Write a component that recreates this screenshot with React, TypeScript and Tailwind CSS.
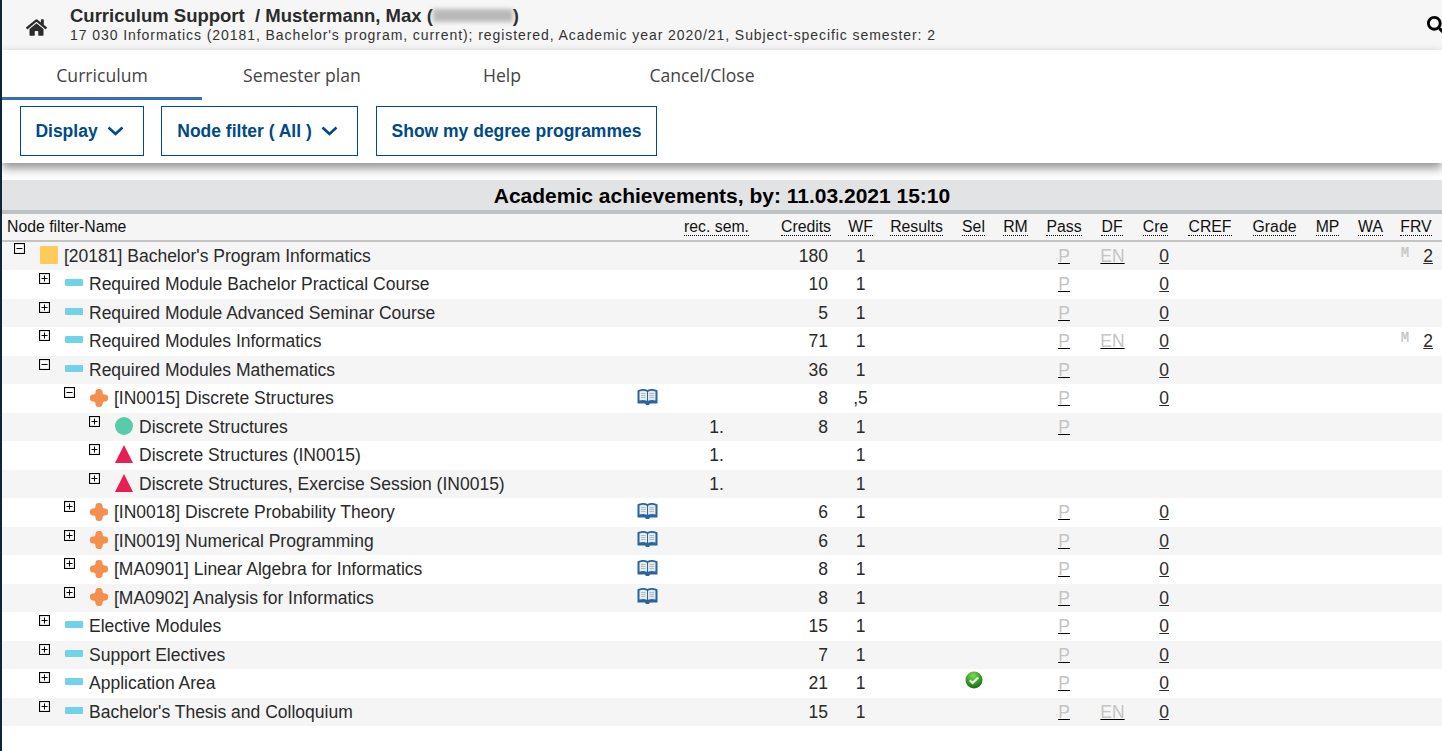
import { FaHome, FaSearch } from 'react-icons/fa'

const GRID = 'grid grid-cols-[630px_43px_90px_75px_41px_71px_42px_43px_54px_42px_45px_64px_64px_43px_43px_50px]'

const headers = [
  { label: 'rec. sem.', cls: 'text-center pr-[7px]' },
  { label: 'Credits', cls: 'text-center pl-[7px]' },
  { label: 'WF', cls: 'text-center' },
  { label: 'Results', cls: 'text-center' },
  { label: 'Sel', cls: 'text-center pl-[1px]' },
  { label: 'RM', cls: 'text-center' },
  { label: 'Pass', cls: 'text-center' },
  { label: 'DF', cls: 'text-center' },
  { label: 'Cre', cls: 'text-center' },
  { label: 'CREF', cls: 'text-center' },
  { label: 'Grade', cls: 'text-center pl-[1px]' },
  { label: 'MP', cls: 'text-center' },
  { label: 'WA', cls: 'text-center' },
  { label: 'FRV', cls: 'text-center pr-[2px]' },
]

type Row = {
  level: number
  icon: 'folder' | 'dash' | 'plus' | 'dot' | 'tri'
  name: string
  open?: boolean
  book?: boolean
  sem?: string
  credits?: string
  wf: string
  sel?: boolean
  pass?: boolean
  df?: boolean
  cre?: boolean
  frv?: boolean
}

const rows: Row[] = [
  { level: 0, icon: 'folder', name: "[20181] Bachelor's Program Informatics", open: true, credits: '180', wf: '1', pass: true, df: true, cre: true, frv: true },
  { level: 1, icon: 'dash', name: 'Required Module Bachelor Practical Course', credits: '10', wf: '1', pass: true, cre: true },
  { level: 1, icon: 'dash', name: 'Required Module Advanced Seminar Course', credits: '5', wf: '1', pass: true, cre: true },
  { level: 1, icon: 'dash', name: 'Required Modules Informatics', credits: '71', wf: '1', pass: true, df: true, cre: true, frv: true },
  { level: 1, icon: 'dash', name: 'Required Modules Mathematics', open: true, credits: '36', wf: '1', pass: true, cre: true },
  { level: 2, icon: 'plus', name: '[IN0015] Discrete Structures', open: true, book: true, credits: '8', wf: ',5', pass: true, cre: true },
  { level: 3, icon: 'dot', name: 'Discrete Structures', sem: '1.', credits: '8', wf: '1', pass: true },
  { level: 3, icon: 'tri', name: 'Discrete Structures (IN0015)', sem: '1.', wf: '1' },
  { level: 3, icon: 'tri', name: 'Discrete Structures, Exercise Session (IN0015)', sem: '1.', wf: '1' },
  { level: 2, icon: 'plus', name: '[IN0018] Discrete Probability Theory', book: true, credits: '6', wf: '1', pass: true, cre: true },
  { level: 2, icon: 'plus', name: '[IN0019] Numerical Programming', book: true, credits: '6', wf: '1', pass: true, cre: true },
  { level: 2, icon: 'plus', name: '[MA0901] Linear Algebra for Informatics', book: true, credits: '8', wf: '1', pass: true, cre: true },
  { level: 2, icon: 'plus', name: '[MA0902] Analysis for Informatics', book: true, credits: '8', wf: '1', pass: true, cre: true },
  { level: 1, icon: 'dash', name: 'Elective Modules', credits: '15', wf: '1', pass: true, cre: true },
  { level: 1, icon: 'dash', name: 'Support Electives', credits: '7', wf: '1', pass: true, cre: true },
  { level: 1, icon: 'dash', name: 'Application Area', credits: '21', wf: '1', sel: true, pass: true, cre: true },
  { level: 1, icon: 'dash', name: "Bachelor's Thesis and Colloquium", credits: '15', wf: '1', pass: true, df: true, cre: true },
]

const indent = ['ml-[12px]', 'ml-[37px]', 'ml-[62px]', 'ml-[87px]']

function Toggle({ open, top }: { open?: boolean; top?: boolean }) {
  return (
    <svg width="11" height="11" viewBox="0 0 11 11" className={`shrink-0 self-start ${top ? 'mt-[1px]' : 'mt-[3px]'}`}>
      <rect x="0.5" y="0.5" width="10" height="10" fill="#fff" stroke="#000" strokeWidth="1.2" />
      <path d={open ? 'M2.500 5.500h6' : 'M2.500 5.500h6M5.500 2.500v6'} stroke="#000" />
    </svg>
  )
}

function NodeIcon({ type }: { type: Row['icon'] }) {
  if (type === 'folder') {
    return <span className="block w-[18px] h-[18px] -mt-[2px] rounded-[1px] bg-[#fdcb5c]" />
  }
  if (type === 'dash') {
    return <span className="block w-[18px] h-[7px] mb-[3px] rounded-[1px] bg-[#70d3e8]" />
  }
  if (type === 'plus') {
    return (
      <svg width="18" height="18" viewBox="0 0 18 18" className="-mt-[1px]">
        <g fill="#f58f4e">
          <rect x="0" y="5.500" width="18" height="7" rx="3" />
          <rect x="5.500" y="0" width="7" height="18" rx="3" />
          <rect x="3.200" y="3.200" width="11.600" height="11.600" transform="rotate(45 9 9)" />
        </g>
      </svg>
    )
  }
  if (type === 'dot') {
    return <span className="block w-[18px] h-[18px] -mt-[1px] rounded-full bg-[#58cbab]" />
  }
  return (
    <svg width="18" height="18" viewBox="0 0 18 18" className="-mt-[2px]">
      <path d="M9 0 18 18H0z" fill="#e81f52" />
    </svg>
  )
}

function Book() {
  return (
    <svg width="21" height="18" viewBox="0 0 21 18" className="-mt-[3px]">
      <path d="M0.500 2.500C4 .5 8 .5 10.500 2 13 .5 17 .5 20.500 2.500V15.500h-7.500l-1 1.500h-3L8 15.500H.5z" fill="#28659b" />
      <path d="M2.500 3.500c2.500-1 5-1 7.500.3v8.900c-2.500-1-5-1-7.500-.3z" fill="#e8edf0" />
      <path d="M18.500 3.500c-2.500-1-5-1-7.500.3v8.900c2.500-1 5-1 7.500-.3z" fill="#e2e8ec" />
      <path d="M4 5.500h4.500M4 7.500h4.500M4 9.500h4.500M12.500 5.500h4.500M12.500 7.500h4.500M12.500 9.500h4.500" stroke="#b4bcc2" />
    </svg>
  )
}

function Check() {
  return (
    <svg width="18" height="18" viewBox="0 0 18 18" className="-mt-[7px] ml-[1px]">
      <defs>
        <radialGradient id="ok" cx="45%" cy="25%" r="80%">
          <stop offset="0%" stopColor="#7ed957" />
          <stop offset="60%" stopColor="#2f9a22" />
          <stop offset="100%" stopColor="#17600f" />
        </radialGradient>
      </defs>
      <circle cx="9" cy="9" r="8.500" fill="url(#ok)" />
      <path d="M4.800 9.300 7.600 12 13.200 6.500" fill="none" stroke="#f2f7ee" strokeWidth="2.200" />
    </svg>
  )
}

function Chevron() {
  return (
    <svg width="17" height="10" viewBox="0 0 17 10" className="ml-[9px]">
      <path d="M1.500 1.500 8.500 8l7-6.500" fill="none" stroke="#004a87" strokeWidth="2.600" />
    </svg>
  )
}

export default function App() {
  return (
    <div className="w-[1442px] h-[751px] overflow-hidden bg-white border-l-2 border-[#13233c] text-black font-['Liberation_Sans',Arial,sans-serif]">
      <header className="h-[50px] bg-[#f6f6f6] flex items-center overflow-hidden">
        <FaHome className="ml-[24px] w-[21px] h-[21px] text-[#2b2b2b] mt-[5px]" />
        <div className="ml-[23px] flex-1 -mt-[2px]">
          <div className="flex items-center text-[18.5px] leading-[20px] font-bold text-[#2b2b2b]">
            Curriculum Support&nbsp; / Mustermann, Max (
            <span className="block w-[80px] h-[13px] bg-[#b9b9b9] blur-[2px]" />
            )
          </div>
          <div className="text-[14px] leading-[16px] tracking-[0.93px] text-[#333] mt-[1px]">
            17 030 Informatics (20181, Bachelor's program, current); registered, Academic year 2020/21, Subject-specific semester: 2
          </div>
        </div>
        <FaSearch className="w-[18px] h-[18px] text-black shrink-0 -mr-[3px]" />
      </header>

      <div className="relative z-10 h-[113px] bg-white shadow-[0_5px_10px_rgba(0,0,0,0.45)]">
        <nav className="flex h-[50px] font-['Open_Sans',sans-serif] text-[17.6px] text-[#444]">
          <div className="w-[200px] text-center pt-[12px] border-b-[3px] border-[#3470b2]">Curriculum</div>
          <div className="w-[200px] text-center pt-[12px]">Semester plan</div>
          <div className="w-[200px] text-center pt-[12px]">Help</div>
          <div className="w-[200px] text-center pt-[12px]">Cancel/Close</div>
        </nav>
        <div className="flex pt-[6px] pl-[18px] text-[17.5px] font-bold text-[#004a87]">
          <button className="h-[50px] w-[124px] pr-[5px] border border-[#004a87] flex items-center justify-center">
            Display
            <Chevron />
          </button>
          <button className="h-[50px] w-[197px] pr-[4px] ml-[17px] border border-[#004a87] flex items-center justify-center">
            Node filter ( All )
            <Chevron />
          </button>
          <button className="h-[50px] w-[281px] ml-[18px] border border-[#004a87] flex items-center justify-center">
            Show my degree programmes
          </button>
        </div>
      </div>

      <div className="h-[17px]" />
      <h1 className="h-[30px] bg-[#e2e3e5] text-center text-[21px] leading-[32px] font-bold">
        Academic achievements, by: 11.03.2021 15:10
      </h1>
      <div className="h-[4px] bg-[#bcc1c4]" />

      <div className={`${GRID} h-[27.5px] bg-[#f5f5f5] border-b-2 border-[#c4c4c4] text-[15.8px] leading-[26px] text-[#111]`}>
        <div className="pl-[5px] col-span-2">Node filter-Name</div>
        {headers.map((h) => (
          <div key={h.label} className={h.cls}>
            <span className="border-b border-dotted border-black">{h.label}</span>
          </div>
        ))}
      </div>

      {rows.map((r, i) => (
        <div
          key={r.name}
          className={`${GRID} h-[28.5px] items-center text-[17.5px] leading-[28px] text-[#2a2a2a] ${i % 2 === 0 ? 'bg-[#f5f5f5]' : 'bg-white'}`}
        >
          <div className={`flex items-center h-full ${indent[r.level]}`}>
            <Toggle open={r.open} top={r.level === 0} />
            <span className="ml-[15px] w-[18px] flex justify-center shrink-0">
              <NodeIcon type={r.icon} />
            </span>
            <span className="ml-[6px] whitespace-nowrap">{r.name}</span>
          </div>
          <div className="flex items-center h-full pl-[5px]">{r.book && <Book />}</div>
          <div className="text-center pr-[7px]">{r.sem}</div>
          <div className="text-right pr-[12px]">{r.credits}</div>
          <div className="text-center">{r.wf}</div>
          <div />
          <div className="flex justify-center">{r.sel && <Check />}</div>
          <div />
          <div className="text-center">
            {r.pass && <span className="text-[#c4c4c4] underline decoration-black">P</span>}
          </div>
          <div className="text-center pl-[1px]">
            {r.df && <span className="text-[#c4c4c4] underline decoration-black">EN</span>}
          </div>
          <div className="text-right pr-[9px]">
            {r.cre && <span className="underline">0</span>}
          </div>
          <div />
          <div />
          <div />
          <div />
          <div className="flex justify-end pr-[9px]">
            {r.frv && (
              <>
                <span className="self-start mt-[4px] font-['Liberation_Mono',monospace] font-bold text-[14px] leading-[14px] text-[#c8c8c8] mr-[14px]">M</span>
                <span className="underline">2</span>
              </>
            )}
          </div>
        </div>
      ))}
    </div>
  )
}
